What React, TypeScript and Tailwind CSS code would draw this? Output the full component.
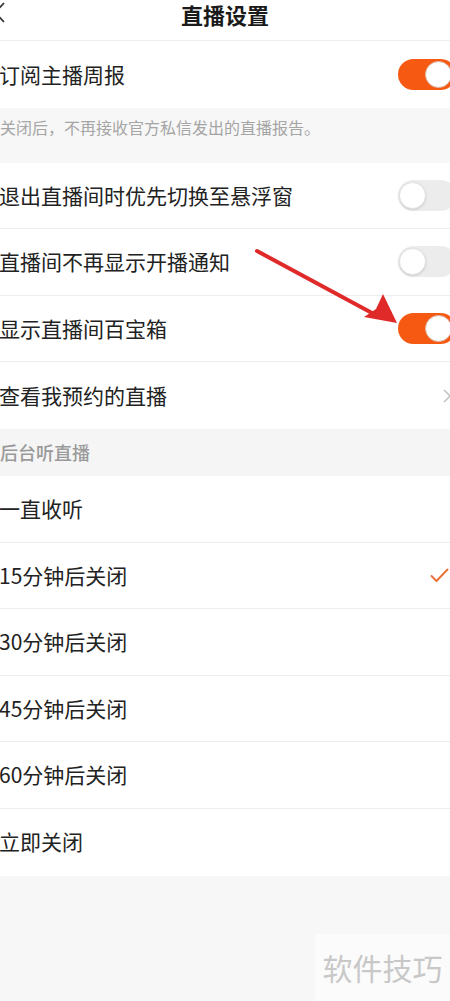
const font = "font-['Noto_Sans_CJK_SC','Noto_Sans',sans-serif]";

const Toggle = ({ on }: { on: boolean }) => {
  return (
    <div
      className={`relative h-[31px] w-[58px] shrink-0 rounded-full -mr-[6px] ${
        on ? "bg-[#f65a12]" : "bg-[#ececec]"
      }`}
    >
      <div
        className={`absolute top-[2px] h-[27px] w-[27px] rounded-full bg-white ${
          on ? "left-[27px] border border-[#d8b7a6]" : "left-[1px] border border-[#e2e2e2] shadow-sm"
        }`}
      ></div>
    </div>
  );
};

const Row = ({
  label,
  right,
  last,
}: {
  label: string;
  right?: React.ReactNode;
  last?: boolean;
}) => {
  return (
    <div
      className={`flex h-[66.6px] items-center justify-between bg-white ${
        last ? "" : "border-b border-[#ededed]"
      }`}
    >
      <span className="text-[21px] text-[#222] -ml-[1px]">{label}</span>
      {right}
    </div>
  );
};

const Check = () => (
  <svg width="19" height="15" viewBox="0 0 19 15" className="mr-[1px]">
    <path
      d="M1.5 8 L6.5 13 L17.5 1.5"
      fill="none"
      stroke="#e8733a"
      strokeWidth="2"
      strokeLinecap="round"
      strokeLinejoin="round"
    />
  </svg>
);

const Chevron = () => (
  <svg width="10" height="16" viewBox="0 0 10 16" className="-mr-[2px]">
    <path d="M2 2 L8 8 L2 14" fill="none" stroke="#c4c4c4" strokeWidth="1.6" />
  </svg>
);

export default function App() {
  const timers = ["一直收听", "15分钟后关闭", "30分钟后关闭", "45分钟后关闭", "60分钟后关闭", "立即关闭"];

  return (
    <div className={`relative h-[1001px] w-[450px] overflow-hidden bg-[#f7f7f7] ${font}`}>
      {/* header */}
      <div className="relative flex h-[41px] items-center justify-center border-b border-[#eeeeee] bg-white">
        <svg width="12" height="22" viewBox="0 0 12 22" className="absolute -left-[6px] top-[2px]">
          <path d="M10 1 L1 10.5 L10 20" fill="none" stroke="#333" strokeWidth="1.8" />
        </svg>
        <h1 className="-mt-[12px] text-[22px] leading-[26px] font-bold text-[#1a1a1a]">直播设置</h1>
      </div>

      <Row label="订阅主播周报" right={<Toggle on={true} />} last />
      <div className="flex h-[55px] items-center bg-[#f7f7f7]">
        <p className="-mt-[16px] text-[16px] text-[#a5a5a5]">关闭后，不再接收官方私信发出的直播报告。</p>
      </div>

      <Row label="退出直播间时优先切换至悬浮窗" right={<Toggle on={false} />} />
      <Row label="直播间不再显示开播通知" right={<Toggle on={false} />} />
      <Row label="显示直播间百宝箱" right={<Toggle on={true} />} />
      <Row label="查看我预约的直播" right={<Chevron />} last />

      <div className="flex h-[47px] items-center bg-[#f5f5f5]">
        <span className="text-[18px] font-medium text-[#9a9a9a]">后台听直播</span>
      </div>

      {timers.map((t, i) => (
        <Row
          key={t}
          label={t}
          right={i === 1 ? <Check /> : undefined}
          last={i === timers.length - 1}
        />
      ))}

      {/* watermark */}
      <div className="absolute bottom-0 right-0 flex h-[67px] w-[135px] items-center justify-center bg-[#fbfbfb]">
        <span className="text-[30px] text-[#c8c8c8]">软件技巧</span>
      </div>

      {/* red annotation arrow */}
      <svg
        width="450"
        height="1001"
        viewBox="0 0 450 1001"
        className="pointer-events-none absolute left-0 top-0"
      >
        <line x1="257" y1="251" x2="372" y2="313" stroke="#e02a2a" strokeWidth="4" strokeLinecap="round" />
        <polygon points="397,323 383,294 376,309 364,317" fill="#e02a2a" />
      </svg>
    </div>
  );
}
